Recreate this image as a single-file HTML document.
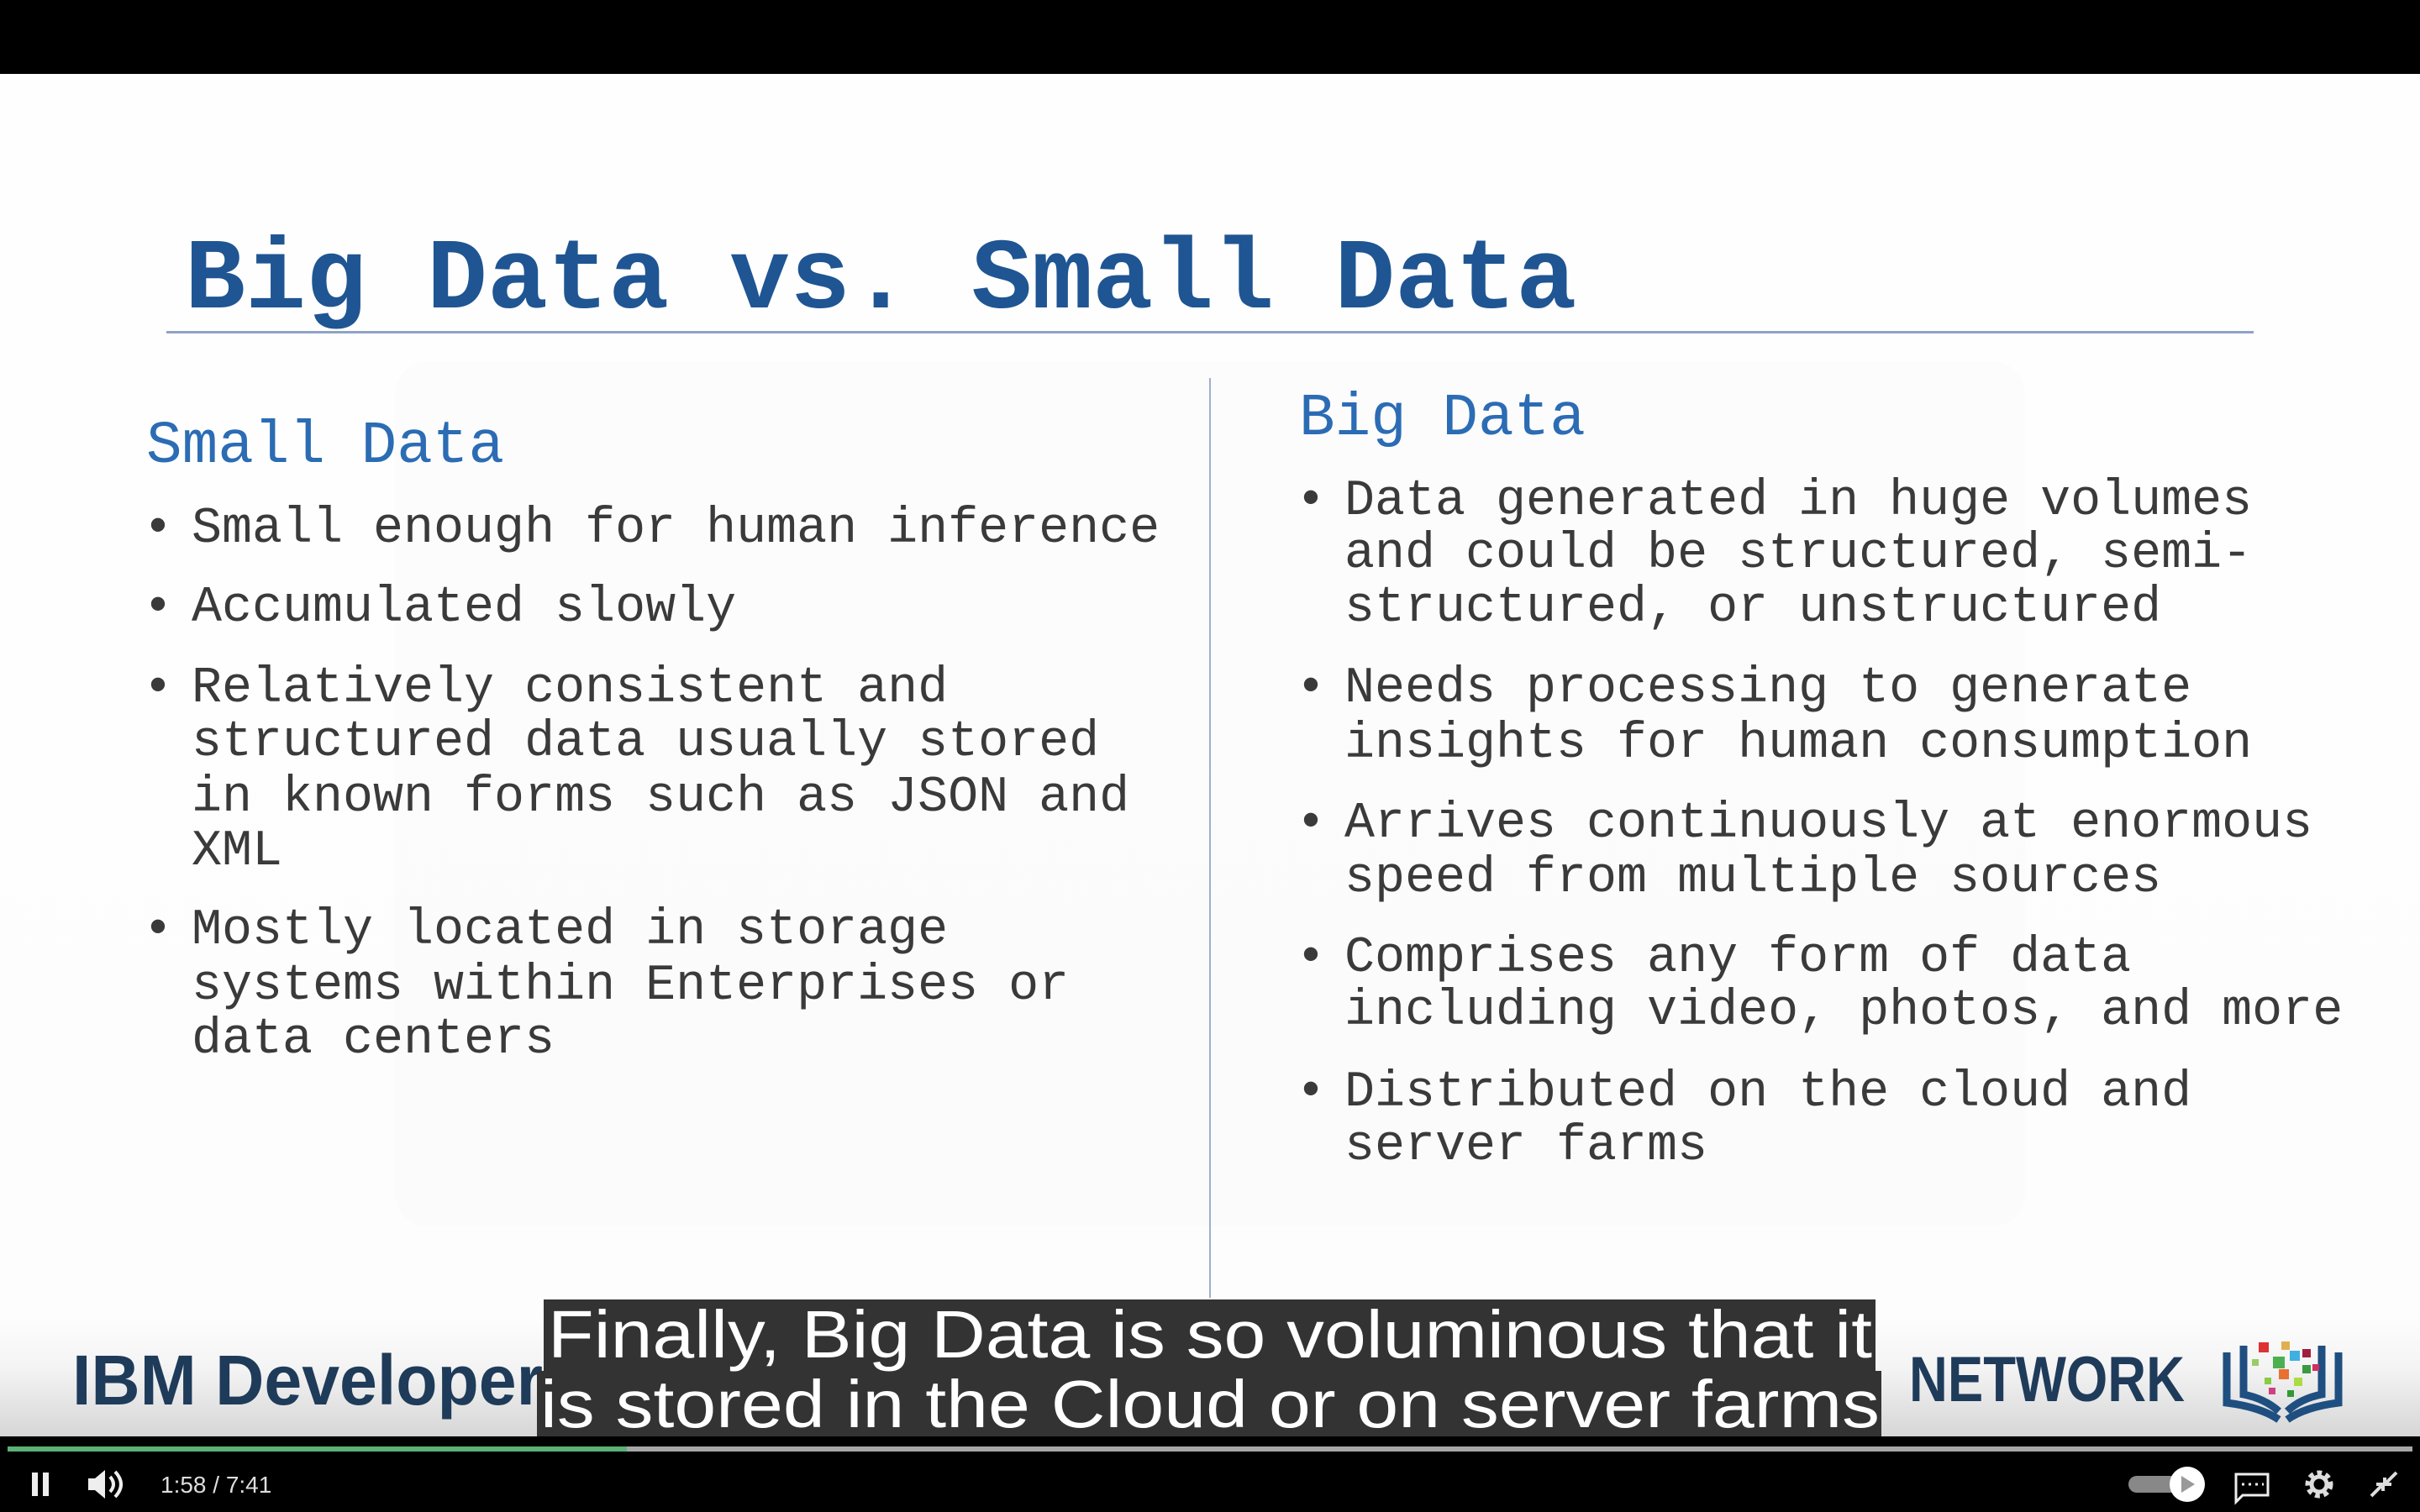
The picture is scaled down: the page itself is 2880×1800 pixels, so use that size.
<!DOCTYPE html>
<html><head><meta charset="utf-8">
<style>
*{margin:0;padding:0;box-sizing:border-box}
body{width:2880px;height:1800px;overflow:hidden;background:#000;position:relative;font-family:"Liberation Mono",monospace}
#slide{position:absolute;left:0;top:88px;width:2880px;height:1622px;background:linear-gradient(#fefefe 0,#fdfdfd 1480px,#f4f4f4 1540px,#d6d6d6 1622px)}
.t{position:absolute;white-space:pre;font-family:"Liberation Mono",monospace}
.title{left:220px;top:275px;font-size:120px;line-height:120px;font-weight:bold;color:#1f5592}
.h{font-size:71px;line-height:71px;color:#2b6cb4}
.b{font-size:60px;line-height:65px;color:#3a3a3a}
.wm{position:absolute;background:rgba(235,235,235,0.12)}
</style></head><body>
<div id="slide"></div>
<div class="wm" style="left:470px;top:430px;width:1940px;height:1030px;border-radius:40px"></div>
<div class="t title">Big Data vs. Small Data</div>
<div style="position:absolute;left:198px;top:394px;width:2484px;height:3px;background:#8fa3c6"></div>
<div style="position:absolute;left:1439px;top:450px;width:2px;height:1095px;background:#9fb0cc"></div>

<div class="t h" style="left:174px;top:497px">Small Data</div>
<div class="t h" style="left:1546px;top:464px">Big Data</div>

<div class="t b" style="left:170px;top:598px">•</div><div class="t b" style="left:228px;top:598px">Small enough for human inference</div>
<div class="t b" style="left:170px;top:692px">•</div><div class="t b" style="left:228px;top:692px">Accumulated slowly</div>
<div class="t b" style="left:170px;top:788px">•</div><div class="t b" style="left:228px;top:788px">Relatively consistent and</div>
<div class="t b" style="left:228px;top:852px">structured data usually stored</div>
<div class="t b" style="left:228px;top:918px">in known forms such as JSON and</div>
<div class="t b" style="left:228px;top:982px">XML</div>
<div class="t b" style="left:170px;top:1076px">•</div><div class="t b" style="left:228px;top:1076px">Mostly located in storage</div>
<div class="t b" style="left:228px;top:1142px">systems within Enterprises or</div>
<div class="t b" style="left:228px;top:1206px">data centers</div>

<div class="t b" style="left:1542px;top:565px">•</div><div class="t b" style="left:1600px;top:565px">Data generated in huge volumes</div>
<div class="t b" style="left:1600px;top:628px">and could be structured, semi-</div>
<div class="t b" style="left:1600px;top:692px">structured, or unstructured</div>
<div class="t b" style="left:1542px;top:788px">•</div><div class="t b" style="left:1600px;top:788px">Needs processing to generate</div>
<div class="t b" style="left:1600px;top:854px">insights for human consumption</div>
<div class="t b" style="left:1542px;top:949px">•</div><div class="t b" style="left:1600px;top:949px">Arrives continuously at enormous</div>
<div class="t b" style="left:1600px;top:1014px">speed from multiple sources</div>
<div class="t b" style="left:1542px;top:1109px">•</div><div class="t b" style="left:1600px;top:1109px">Comprises any form of data</div>
<div class="t b" style="left:1600px;top:1172px">including video, photos, and more</div>
<div class="t b" style="left:1542px;top:1269px">•</div><div class="t b" style="left:1600px;top:1269px">Distributed on the cloud and</div>
<div class="t b" style="left:1600px;top:1333px">server farms</div>

<svg style="position:absolute;left:0;top:0" width="2880" height="1800">
<text x="86" y="1672" font-family="Liberation Sans,sans-serif" font-weight="bold" font-size="84" fill="#1f3b5a" textLength="560" lengthAdjust="spacingAndGlyphs">IBM Developer</text>
<text x="2005" y="1668" font-family="Liberation Sans,sans-serif" font-weight="bold" font-size="76" fill="#1f3b5a" textLength="230" lengthAdjust="spacingAndGlyphs">SKILLS</text>
<text x="2272" y="1668" font-family="Liberation Sans,sans-serif" font-weight="bold" font-size="76" fill="#1f3b5a" textLength="328" lengthAdjust="spacingAndGlyphs">NETWORK</text>
<g fill="none" stroke="#1f4f80" stroke-width="9">
<path d="M2650 1610 V1670 Q2690 1675 2712 1690"/><path d="M2670 1602 V1660 Q2695 1665 2712 1680"/>
<path d="M2783 1610 V1670 Q2743 1675 2722 1690"/><path d="M2763 1602 V1660 Q2738 1665 2722 1680"/>
</g>
<g>
<rect x="2688" y="1598" width="12" height="12" fill="#d33"/><rect x="2715" y="1597" width="10" height="10" fill="#e0b050"/>
<rect x="2740" y="1606" width="10" height="10" fill="#a02040"/><rect x="2705" y="1615" width="14" height="14" fill="#4cb050"/>
<rect x="2725" y="1608" width="12" height="12" fill="#40b0e0"/><rect x="2680" y="1618" width="8" height="8" fill="#9c6"/>
<rect x="2740" y="1625" width="10" height="10" fill="#3a9a40"/><rect x="2712" y="1630" width="12" height="12" fill="#e87030"/>
<rect x="2695" y="1640" width="8" height="8" fill="#8c4"/><rect x="2730" y="1640" width="10" height="10" fill="#ad4"/>
<rect x="2700" y="1652" width="8" height="8" fill="#d04080"/><rect x="2722" y="1655" width="8" height="8" fill="#393"/>
<rect x="2752" y="1624" width="8" height="8" fill="#d03060"/>
</g>
<rect x="647" y="1547" width="1585" height="85" fill="#333"/>
<rect x="639" y="1632" width="1600" height="78" fill="#333"/>
<text x="652" y="1616" font-family="Liberation Sans,sans-serif" font-size="80" fill="#fff" textLength="1576" lengthAdjust="spacingAndGlyphs">Finally, Big Data is so voluminous that it</text>
<text x="643" y="1699" font-family="Liberation Sans,sans-serif" font-size="80" fill="#fff" textLength="1594" lengthAdjust="spacingAndGlyphs">is stored in the Cloud or on server farms</text>
<rect x="0" y="1710" width="2880" height="90" fill="#000"/>
<rect x="9" y="1722" width="2862" height="6" fill="#a6a6a6"/>
<rect x="9" y="1722" width="737" height="6" fill="#5cb176"/>
<rect x="38" y="1753" width="7" height="28" fill="#eee"/><rect x="51" y="1753" width="7" height="28" fill="#eee"/>
<path d="M105 1760 h8 l12 -10 v34 l-12 -10 h-8z" fill="#eee"/>
<path d="M131 1758 q8 9 0 18 M137 1752 q14 15 0 30" stroke="#eee" stroke-width="4" fill="none"/>
<text x="191" y="1777" font-family="Liberation Sans,sans-serif" font-size="28" fill="#ddd">1:58  /  7:41</text>
<rect x="2533" y="1757" width="70" height="20" rx="10" fill="#888"/>
<circle cx="2603" cy="1767" r="21" fill="#fff"/>
<path d="M2596 1757 v20 l16 -10z" fill="#999"/>
<path d="M2661 1755 h38 v25 h-30 l-8 8z" stroke="#eee" stroke-width="3" fill="none"/>
<path d="M2668 1767 h3 M2676 1767 h3 M2684 1767 h3 M2692 1767 h2" stroke="#eee" stroke-width="3"/>
<circle cx="2760" cy="1767" r="12" fill="none" stroke="#ddd" stroke-width="9" stroke-dasharray="5 4"/>
<circle cx="2760" cy="1767" r="9" fill="none" stroke="#ddd" stroke-width="5"/>
<path d="M2822 1781 l12 -12 M2828 1767 h8 v8 M2852 1753 l-12 12 M2846 1767 h-8 v-8" stroke="#ddd" stroke-width="4" fill="none"/>
</svg>
</body></html>
